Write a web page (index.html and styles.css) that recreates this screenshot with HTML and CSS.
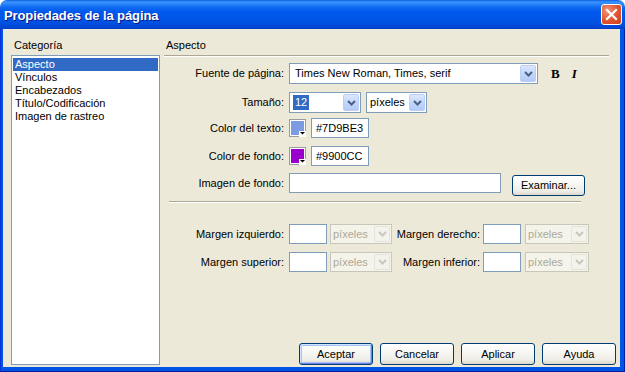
FILE: index.html
```html
<!DOCTYPE html>
<html lang="es">
<head>
<meta charset="utf-8">
<title>Propiedades de la página</title>
<link rel="stylesheet" href="styles.css">
</head>
<body>
<div class="window">
  <div class="titlebar">
    <span class="title">Propiedades de la página</span>
    <span class="close"><svg width="13" height="13" viewBox="0 0 13 13"><path d="M2 2 L11 11 M11 2 L2 11" stroke="#fff" stroke-width="2.2" stroke-linecap="square"/></svg></span>
  </div>
  <div class="frame">
    <div class="client">
      <div class="cat">
        <div class="cat-label">Categoría</div>
        <ul class="list">
          <li class="sel">Aspecto</li>
          <li>Vínculos</li>
          <li>Encabezados</li>
          <li>Título/Codificación</li>
          <li>Imagen de rastreo</li>
        </ul>
      </div>
      <div class="panel">
        <div class="head">Aspecto</div>
        <div class="sep sep-head"></div>

        <div class="row r1">
          <span class="lbl">Fuente de página:</span>
          <div class="select sel-font"><span class="val v-font">Times New Roman, Times, serif</span><span class="arrow"><svg width="9" height="6" viewBox="0 0 9 6"><path d="M1 1 L4.5 4.5 L8 1" fill="none" stroke="#4D6185" stroke-width="2"/></svg></span></div>
          <span class="fmt bold">B</span>
          <span class="fmt ital">I</span>
        </div>

        <div class="row r2">
          <span class="lbl">Tamaño:</span>
          <div class="select sel-size"><span class="val v-size"><span class="hl">12</span></span><span class="arrow"><svg width="9" height="6" viewBox="0 0 9 6"><path d="M1 1 L4.5 4.5 L8 1" fill="none" stroke="#4D6185" stroke-width="2"/></svg></span></div>
          <div class="select sel-unit"><span class="val v-unit">píxeles</span><span class="arrow"><svg width="9" height="6" viewBox="0 0 9 6"><path d="M1 1 L4.5 4.5 L8 1" fill="none" stroke="#4D6185" stroke-width="2"/></svg></span></div>
        </div>

        <div class="row r3">
          <span class="lbl">Color del texto:</span>
          <span class="swatch"><svg width="17" height="18" viewBox="0 0 17 18"><rect x="0.5" y="0.5" width="16" height="17" fill="#fff" stroke="#9C9C9C"/><rect x="2" y="2" width="13" height="14" fill="#7D9BE3"/><path d="M10 12 H17 V18 H10 Z" fill="#fff"/><path d="M11 13 H16 L13.5 15.5 Z" fill="#000"/></svg></span>
          <span class="field">#7D9BE3</span>
        </div>

        <div class="row r4">
          <span class="lbl">Color de fondo:</span>
          <span class="swatch"><svg width="17" height="18" viewBox="0 0 17 18"><rect x="0.5" y="0.5" width="16" height="17" fill="#fff" stroke="#9C9C9C"/><rect x="2" y="2" width="13" height="14" fill="#9900CC"/><path d="M10 12 H17 V18 H10 Z" fill="#fff"/><path d="M11 13 H16 L13.5 15.5 Z" fill="#000"/></svg></span>
          <span class="field">#9900CC</span>
        </div>

        <div class="row r5">
          <span class="lbl">Imagen de fondo:</span>
          <span class="input wide"></span>
          <span class="btn btn-exam">Examinar...</span>
        </div>

        <div class="sep sep-mid"></div>

        <div class="row m1">
          <span class="lbl">Margen izquierdo:</span>
          <span class="input small"></span>
          <div class="select dis d1"><span class="val">píxeles</span><span class="arrow"><svg width="9" height="6" viewBox="0 0 9 6"><path d="M1 1 L4.5 4.5 L8 1" fill="none" stroke="#C9C7BA" stroke-width="2"/></svg></span></div>
          <span class="lbl2">Margen derecho:</span>
          <span class="input small"></span>
          <div class="select dis d2"><span class="val">píxeles</span><span class="arrow"><svg width="9" height="6" viewBox="0 0 9 6"><path d="M1 1 L4.5 4.5 L8 1" fill="none" stroke="#C9C7BA" stroke-width="2"/></svg></span></div>
        </div>

        <div class="row m2">
          <span class="lbl">Margen superior:</span>
          <span class="input small"></span>
          <div class="select dis d1"><span class="val">píxeles</span><span class="arrow"><svg width="9" height="6" viewBox="0 0 9 6"><path d="M1 1 L4.5 4.5 L8 1" fill="none" stroke="#C9C7BA" stroke-width="2"/></svg></span></div>
          <span class="lbl2">Margen inferior:</span>
          <span class="input small"></span>
          <div class="select dis d2"><span class="val">píxeles</span><span class="arrow"><svg width="9" height="6" viewBox="0 0 9 6"><path d="M1 1 L4.5 4.5 L8 1" fill="none" stroke="#C9C7BA" stroke-width="2"/></svg></span></div>
        </div>

        <div class="buttons">
          <span class="btn default">Aceptar</span>
          <span class="btn">Cancelar</span>
          <span class="btn">Aplicar</span>
          <span class="btn">Ayuda</span>
        </div>
      </div>
    </div>
  </div>
</div>
</body>
</html>
```

FILE: styles.css
```css
* { box-sizing: border-box; }

body {
  margin: 0;
  font-family: "Liberation Sans", Arial, sans-serif;
  font-size: 11px;
  line-height: 13px;
  color: #000;
  background: #fff;
}

.window {
  width: 625px;
  height: 372px;
  display: flex;
  flex-direction: column;
}

.titlebar {
  height: 29px;
  flex: none;
  display: flex;
  align-items: center;
  justify-content: space-between;
  padding: 0 3px 0 4px;
  background: linear-gradient(to bottom, #0A5EE0 0px, #3A93FF 2px, #2B86FA 4px, #0F6CF2 7px, #0058EE 12px, #0055E6 20px, #004CDC 25px, #0042CC 28px, #003CC0 29px);
  border-radius: 7px 7px 0 0;
}

.title {
  color: #fff;
  font-family: "Liberation Sans", Arial, sans-serif;
  font-weight: bold;
  font-size: 13px;
  letter-spacing: -0.1px;
  text-shadow: 1px 1px 0 #0A1883;
  margin-top: 1px;
}

.close {
  width: 21px;
  height: 21px;
  border: 1px solid #fff;
  border-radius: 3px;
  background: radial-gradient(circle at 30% 30%, #F09477 0%, #E0532F 55%, #C8401E 100%);
  display: flex;
  align-items: center;
  justify-content: center;
}

.frame {
  flex: 1;
  display: flex;
  padding: 0 4px 4px 3px;
  background: #0054E3;
  border-left: 1px solid #0831D9;
  border-right: 1px solid #001EA0;
  border-bottom: 1px solid #001EA0;
}

.client {
  flex: 1;
  display: flex;
  background: #ECE9D8;
  padding: 10px 2px 2px 8px;
  margin-left: -1px;
}

.cat {
  width: 149px;
  display: flex;
  flex-direction: column;
}

.cat-label {
  height: 13px;
  padding-left: 3px;
  margin-bottom: 3px;
}

.list {
  flex: 1;
  margin: 0;
  padding: 2px 1px 0 1px;
  list-style: none;
  background: #fff;
  border: 1px solid #7F9DB9;
}

.list li {
  height: 13px;
  padding-left: 2px;
}

.list li.sel {
  background: #316AC5;
  color: #fff;
}

.panel {
  flex: 1;
  margin-left: 4px;
  display: flex;
  flex-direction: column;
}

.head {
  height: 13px;
  padding-left: 2px;
}

.sep {
  height: 2px;
  border-top: 1px solid #ACA899;
  border-bottom: 1px solid #fff;
}

.sep-head {
  margin-top: 3px;
  margin-right: 9px;
}

.row {
  display: flex;
  align-items: center;
  white-space: nowrap;
}

.lbl {
  width: 120px;
  text-align: right;
  margin-right: 5px;
  flex: none;
}

.r1 { margin-top: 6px; height: 21px; }
.r2 { margin-top: 8px; height: 21px; }
.r3 { margin-top: 5px; height: 20px; }
.r4 { margin-top: 8px; height: 20px; }
.r5 { margin-top: 7px; height: 23px; align-items: flex-start; }
.r5 .lbl { line-height: 20px; }

.select {
  display: flex;
  align-items: stretch;
  height: 21px;
  border: 1px solid #7F9DB9;
  background: #fff;
  flex: none;
}

.select .val {
  flex: 1;
  display: flex;
  align-items: center;
  white-space: nowrap;
  overflow: hidden;
}

.arrow {
  width: 16px;
  margin: 1px;
  border: 1px solid #B9CFF8;
  border-radius: 2px;
  background: linear-gradient(to bottom, #DCE7FD 0%, #C4D6FB 50%, #B3CAF7 100%);
  display: flex;
  align-items: center;
  justify-content: center;
}

.sel-font { width: 249px; }
.v-font { padding-left: 5px; }

.fmt {
  font-family: "Liberation Serif", "Times New Roman", serif;
  font-weight: bold;
  font-size: 13px;
}
.bold { margin-left: 13px; }
.ital { margin-left: 12px; font-style: italic; }

.sel-size { width: 72px; }
.v-size { padding-left: 3px; }
.hl {
  background: #316AC5;
  color: #fff;
  padding: 1px 2px;
}

.sel-unit { width: 61px; margin-left: 5px; }
.v-unit { padding-left: 3px; }

.swatch {
  width: 17px;
  height: 18px;
  display: flex;
  flex: none;
}

.field {
  margin-left: 5px;
  width: 58px;
  height: 20px;
  border: 1px solid #7F9DB9;
  background: #fff;
  padding-left: 4px;
  display: flex;
  align-items: center;
}

.input {
  height: 20px;
  border: 1px solid #7F9DB9;
  background: #fff;
  flex: none;
}

.wide { width: 212px; }
.small { width: 38px; }

.btn {
  height: 22px;
  border: 1px solid #003C74;
  border-radius: 3px;
  background: linear-gradient(to bottom, #FFFFFF 0%, #F7F7F4 40%, #EEEDE6 80%, #DCD8CC 100%);
  display: flex;
  align-items: center;
  justify-content: center;
  flex: none;
}

.btn-exam {
  width: 73px;
  height: 21px;
  margin-left: 11px;
  margin-top: 2px;
}

.sep-mid {
  margin-top: 5px;
  margin-left: 5px;
  width: 412px;
}

.m1 { margin-top: 21px; height: 20px; }
.m2 { margin-top: 8px; height: 20px; }

.dis {
  height: 20px;
  border-color: #C9C7BA;
  background: #F5F4EA;
  color: #ACA899;
}
.dis .val { padding-left: 2px; }
.dis .arrow {
  width: 16px;
  border-color: #E5E3DA;
  background: #F3F2EC;
}

.d1 { width: 62px; margin-left: 3px; }
.lbl2 {
  width: 86px;
  margin-left: 2px;
  margin-right: 3px;
  text-align: right;
  white-space: nowrap;
  flex: none;
}
.d2 { width: 64px; margin-left: 4px; }

.buttons {
  margin-top: auto;
  display: flex;
  justify-content: flex-end;
  gap: 7px;
  margin-right: 2px;
}

.buttons .btn { width: 74px; }

.btn.default {
  box-shadow: inset 1px 1px 0 #CEE7FF, inset -1px -1px 0 #6982EE, inset 0 0 0 2px #A6C3F3;
}
```
